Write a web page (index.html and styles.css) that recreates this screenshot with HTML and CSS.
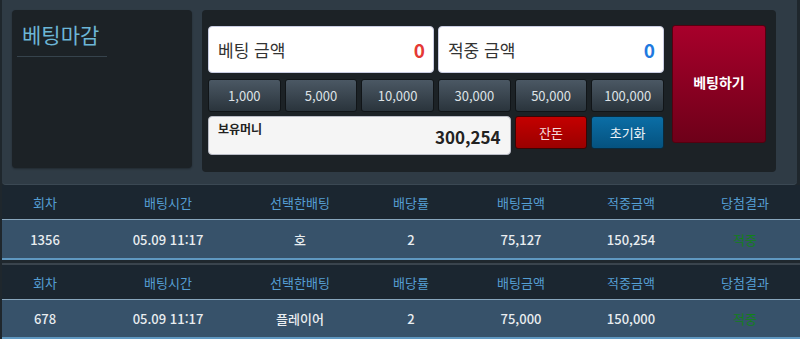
FILE: index.html
```html
<!DOCTYPE html>
<html lang="ko">
<head>
<meta charset="utf-8">
<link rel="stylesheet" href="styles.css">
</head>
<body>
<div class="page">
  <div class="panel">
    <div class="status">
      <div class="status-title">베팅마감</div>
    </div>
    <div class="bet-box">
      <div class="bet-grid">
        <div class="amount"><span class="amount-label">베팅 금액</span><span class="amount-val red">0</span></div>
        <div class="amount"><span class="amount-label">적중 금액</span><span class="amount-val blue">0</span></div>
        <button class="chip">1,000</button>
        <button class="chip">5,000</button>
        <button class="chip">10,000</button>
        <button class="chip">30,000</button>
        <button class="chip">50,000</button>
        <button class="chip">100,000</button>
        <div class="balance"><span class="balance-label">보유머니</span><span class="balance-val">300,254</span></div>
        <button class="act act-red">잔돈</button>
        <button class="act act-blue">초기화</button>
      </div>
      <button class="bet-btn">베팅하기</button>
    </div>
  </div>

  <div class="hist">
    <div class="hrow head"><span>회차</span><span>배팅시간</span><span>선택한배팅</span><span>배당률</span><span>배팅금액</span><span>적중금액</span><span>당첨결과</span></div>
    <div class="hrow data"><span>1356</span><span>05.09 11:17</span><span>호</span><span>2</span><span>75,127</span><span>150,254</span><span class="win">적중</span></div>
  </div>
  <div class="hist second">
    <div class="hrow head"><span>회차</span><span>배팅시간</span><span>선택한배팅</span><span>배당률</span><span>배팅금액</span><span>적중금액</span><span>당첨결과</span></div>
    <div class="hrow data"><span>678</span><span>05.09 11:17</span><span>플레이어</span><span>2</span><span>75,000</span><span>150,000</span><span class="win">적중</span></div>
  </div>
</div>
</body>
</html>
```
FILE: styles.css
```css
* { box-sizing: border-box; }
html, body { margin: 0; padding: 0; }
body {
  background: #1f272d;
  font-family: "Noto Sans CJK KR", "Noto Sans", sans-serif;
  width: 800px;
  height: 339px;
  overflow: hidden;
}
.page { padding-left: 2px; }
.panel {
  width: 795px;
  height: 185px;
  background: #2f3b45;
  border-bottom: 1px solid #3b4853;
  border-radius: 0 0 4px 4px;
  padding: 10px 10px;
  display: flex;
  gap: 10px;
  align-items: flex-start;
}
.status {
  width: 180px;
  height: 158px;
  background: #1c2226;
  border-radius: 4px;
  padding: 8px 5px 0;
  box-shadow: 0 1px 2px rgba(0,0,0,0.3);
}
.status-title {
  width: 90px;
  color: #6cb6d6;
  font-size: 21px;
  line-height: 32px;
  padding: 0 0 6px 5px;
  border-bottom: 1px solid #36434c;
}
.bet-box {
  width: 574px;
  height: 162px;
  background: #1c2226;
  border-radius: 4px;
  padding: 16px 10px 0 6px;
  display: flex;
  gap: 8px;
  align-items: flex-start;
}
.bet-grid {
  width: 456px;
  display: grid;
  grid-template-columns: repeat(6, 1fr);
  grid-template-rows: 48px 34px 39px;
  column-gap: 4px;
  row-gap: 4px;
}
button { font-family: inherit; cursor: pointer; }
.amount {
  grid-column: span 3;
  background: #fff;
  border: 1px solid #c9cde2;
  border-radius: 4px;
  display: flex;
  align-items: center;
  justify-content: space-between;
  padding: 0 8px 0 9px;
  margin-bottom: 1px;
}
.amount-label { font-size: 17px; color: #333; }
.amount-val { font-size: 19px; font-weight: bold; }
.red { color: #e53935; }
.blue { color: #1f7ae0; }
.chip {
  background: linear-gradient(#4b5864, #2a343c);
  border: 1px solid #111518;
  border-radius: 3px;
  color: #dde2e6;
  font-size: 13px;
  padding: 0;
  margin-top: 1px;
}
.balance {
  grid-column: span 4;
  background: #f5f5f5;
  border: 1px solid #b9bcc6;
  border-radius: 4px;
  display: flex;
  justify-content: space-between;
  align-items: center;
  padding: 0 9px 0 9px;
}
.balance-label {
  align-self: flex-start;
  margin-top: 3px;
  font-size: 12px;
  font-weight: bold;
  color: #222;
}
.balance-val {
  font-size: 17px;
  font-weight: bold;
  color: #222;
  margin-top: 2px;
}
.act {
  height: 33px;
  border-radius: 3px;
  font-size: 13px;
  padding: 0;
}
.act-red {
  background: linear-gradient(#c40000, #9a0000);
  border: 1px solid #3a0505;
  color: #f7dede;
}
.act-blue {
  background: linear-gradient(#0b6ea6, #05527f);
  border: 1px solid #0a2a3c;
  color: #eef4f8;
}
.bet-btn {
  width: 94px;
  height: 118px;
  margin-top: -1px;
  background: linear-gradient(#a8002b, #6e0019);
  border: 1px solid #55000f;
  border-radius: 3px;
  color: #fff;
  font-size: 14px;
  font-weight: bold;
  padding: 0 0 4px;
}
.hist { width: 798px; }
.hist.second { margin-top: 3px; }
.hrow {
  display: grid;
  grid-template-columns: 86px 160px 104px 118px 102px 118px 110px;
  align-items: center;
  text-align: center;
  font-size: 13px;
}
.head {
  height: 35px;
  background: #1b2630;
  color: #559ed3;
  border-bottom: 1px solid #88a6bd;
}
.second .head {
  height: 37px;
  border-top: 2px solid #3a444d;
}
.data {
  height: 40px;
  background: #37526a;
  color: #e9edf0;
  font-weight: 500;
  border-bottom: 2px solid #5f98c1;
}
.second .data { height: 39px; }
.data .win { color: #13801a; font-weight: normal; }
```
